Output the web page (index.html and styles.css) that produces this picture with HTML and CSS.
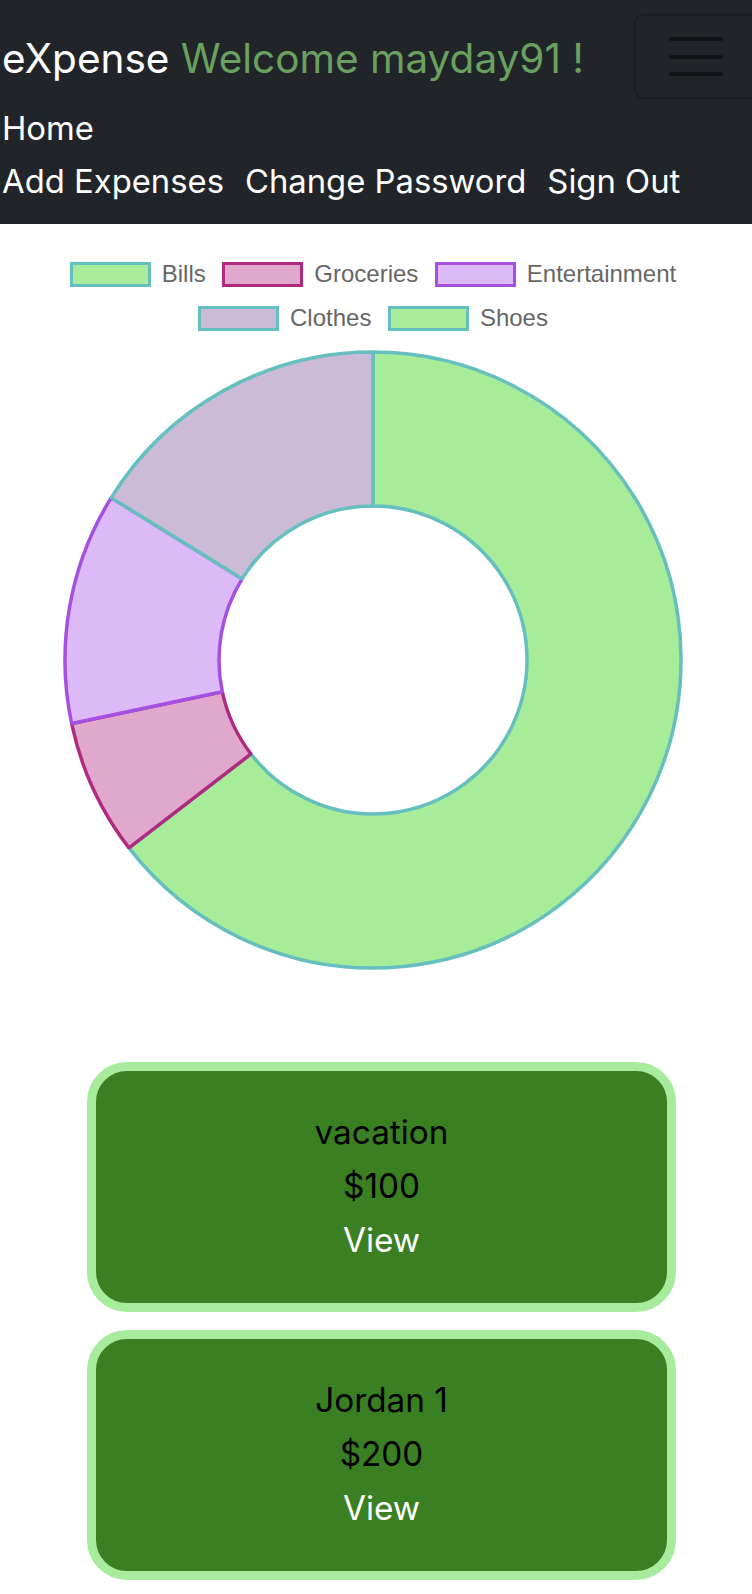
FILE: index.html
```html
<!DOCTYPE html>
<html lang="en">
<head>
<meta charset="utf-8">
<title>eXpense</title>
<link rel="stylesheet" href="styles.css">
</head>
<body>
<nav class="navbar">
  <div class="brand-row">
    <div class="brand"><span class="brand-name">eXpense</span> <span class="welcome">Welcome mayday91 !</span></div>
    <button class="toggler" aria-label="Toggle navigation">
      <span class="bar"></span><span class="bar"></span><span class="bar"></span>
    </button>
  </div>
  <div class="nav-row nav-row-first"><a class="nav-link" href="#">Home</a></div>
  <div class="nav-row"><a class="nav-link" href="#">Add Expenses</a><a class="nav-link" href="#">Change Password</a><a class="nav-link" href="#">Sign Out</a></div>
</nav>

<section class="chart">
  <ul class="legend">
    <li class="legend-item"><span class="swatch sw-bills"></span>Bills</li>
    <li class="legend-item"><span class="swatch sw-groceries"></span>Groceries</li>
    <li class="legend-item"><span class="swatch sw-ent"></span>Entertainment</li>
    <li class="legend-break"></li>
    <li class="legend-item"><span class="swatch sw-clothes"></span>Clothes</li>
    <li class="legend-item"><span class="swatch sw-shoes"></span>Shoes</li>
  </ul>
  <svg class="doughnut" width="622" height="622" viewBox="0 0 622 622">
    <path class="seg seg-bills" d=""/>
    <path class="seg seg-groceries" d=""/>
    <path class="seg seg-ent" d=""/>
    <path class="seg seg-clothes" d=""/>
  </svg>
</section>

<section class="cards">
  <div class="card">
    <p class="card-title">vacation</p>
    <p class="card-amount">$100</p>
    <a class="card-link" href="#">View</a>
  </div>
  <div class="card">
    <p class="card-title">Jordan 1</p>
    <p class="card-amount">$200</p>
    <a class="card-link" href="#">View</a>
  </div>
</section>
<script src="chart.js"></script>
</body>
</html>
```

FILE: chart.js
```js
(function () {
  var cx = 311, cy = 311, R = 308, r = 154;
  var segs = [
    ['.seg-bills', 0, 232.4],
    ['.seg-groceries', 232.4, 258.1],
    ['.seg-ent', 258.1, 301.8],
    ['.seg-clothes', 301.8, 360]
  ];
  function pt(rad, deg) {
    var a = deg * Math.PI / 180;
    return [(cx + rad * Math.sin(a)).toFixed(2), (cy - rad * Math.cos(a)).toFixed(2)];
  }
  segs.forEach(function (s) {
    var a0 = s[1], a1 = s[2], large = (a1 - a0) > 180 ? 1 : 0;
    var o0 = pt(R, a0), o1 = pt(R, a1), i1 = pt(r, a1), i0 = pt(r, a0);
    var d = 'M' + o0.join(',') +
      ' A' + R + ',' + R + ' 0 ' + large + ' 1 ' + o1.join(',') +
      ' L' + i1.join(',') +
      ' A' + r + ',' + r + ' 0 ' + large + ' 0 ' + i0.join(',') + ' Z';
    document.querySelector(s[0]).setAttribute('d', d);
  });
})();
```

FILE: styles.css
```css
html, body {
  margin: 0;
  padding: 0;
  background: #ffffff;
}
body {
  font-family: Inter, "Liberation Sans", sans-serif;
  width: 752px;
  overflow-x: hidden;
}

/* NAVBAR */
.navbar {
  background: #212529;
  padding: 14px 0 16px 2px;
  overflow: hidden;
}
.brand-row {
  display: flex;
  align-items: center;
  justify-content: space-between;
  height: 85px;
}
.brand {
  font-size: 40.5px;
  color: #ffffff;
  white-space: nowrap;
  padding-top: 4px;
}
.welcome {
  color: #6ba15f;
}
.toggler {
  width: 130px;
  height: 85px;
  margin-right: -12px;
  background: transparent;
  border: 2px solid #1b1e22;
  border-radius: 9px;
  display: flex;
  flex-direction: column;
  justify-content: center;
  gap: 13.5px;
  padding: 0 0 0 33px;
  box-sizing: border-box;
}
.bar {
  display: block;
  width: 54px;
  height: 4px;
  border-radius: 2px;
  background: #111316;
}
.nav-row {
  display: flex;
  gap: 21px;
  line-height: 53px;
}
.nav-row-first {
  margin-top: 3px;
}
.nav-link {
  color: #ffffff;
  text-decoration: none;
  font-size: 32.8px;
}

/* CHART */
.chart {
  width: 746px;
  margin-top: 28px;
  display: flex;
  flex-direction: column;
  align-items: center;
}
.legend {
  list-style: none;
  margin: 0;
  padding: 0;
  display: flex;
  flex-wrap: wrap;
  justify-content: center;
  column-gap: 16.5px;
  font-family: "Liberation Sans", Arial, sans-serif;
  font-size: 24px;
  color: #666666;
}
.legend-item {
  display: flex;
  align-items: center;
  height: 44px;
  gap: 11px;
}
.legend-break {
  flex-basis: 100%;
  height: 0;
}
.swatch {
  display: block;
  width: 81px;
  height: 25px;
  box-sizing: border-box;
  border: 3.5px solid #65bfbf;
}
.sw-bills, .sw-shoes { background: #a6ec99; }
.sw-groceries { background: #e0a8cd; border-color: #b02a80; }
.sw-ent { background: #dbbaf7; border-color: #a650e2; }
.sw-clothes { background: #ccbbd8; }

.doughnut {
  display: block;
  margin-top: 9px;
}
.seg {
  stroke-width: 3.5;
  stroke-linejoin: bevel;
}
.seg-bills { fill: #a6ec99; stroke: #65bfbf; }
.seg-groceries { fill: #e0a8cd; stroke: #b02a80; }
.seg-ent { fill: #dbbaf7; stroke: #a650e2; }
.seg-clothes { fill: #ccbbd8; stroke: #65bfbf; }

/* CARDS */
.cards {
  display: flex;
  flex-direction: column;
  gap: 18px;
  padding-left: 87px;
  margin-top: 91px;
  padding-bottom: 20px;
}
.card {
  width: 589px;
  box-sizing: border-box;
  border: 9px solid #a7eb9c;
  border-radius: 40px;
  background: #3a7f22;
  padding: 34px 0 36px;
  display: flex;
  flex-direction: column;
  align-items: center;
  font-size: 33.3px;
  line-height: 54px;
}
.card-title, .card-amount {
  margin: 0;
  color: #000000;
}
.card-link {
  color: #ffffff;
  text-decoration: none;
}
```
